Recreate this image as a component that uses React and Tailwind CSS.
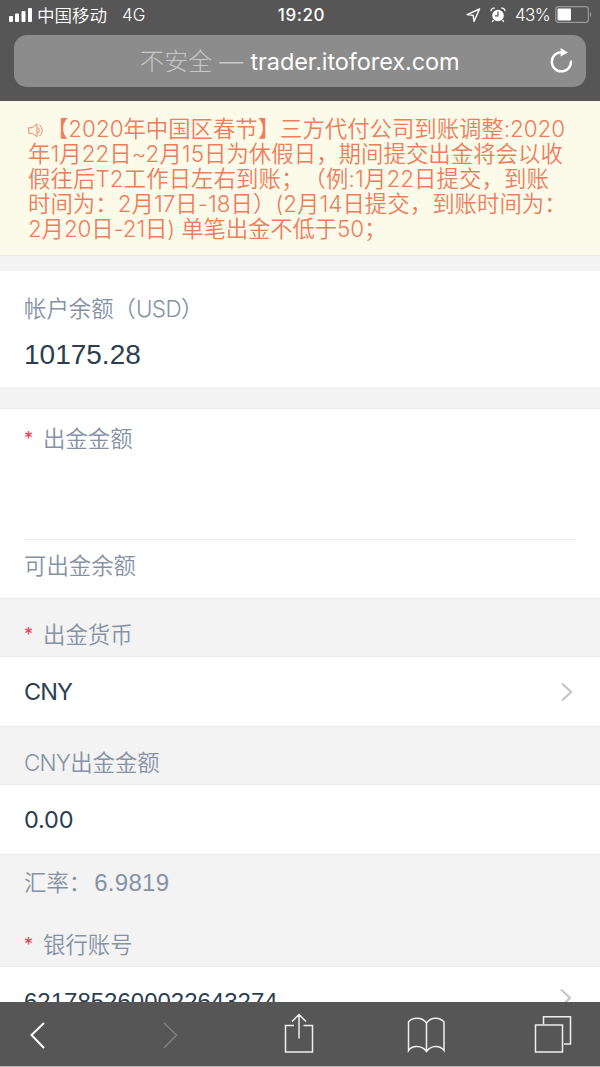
import clsx from "clsx";

const notice = [
    { text: "【2020年中国区春节】三方代付公司到账调整:2020", className: "ml-[2px] tracking-[-0.02px]" },
    { text: "年1月22日~2月15日为休假日，期间提交出金将会以收", className: "tracking-[0.04px]" },
    { text: "假往后T2工作日左右到账；（例:1月22日提交，到账", className: "tracking-[0.1px]" },
    { text: "时间为：2月17日-18日）(2月14日提交，到账时间为：", className: "tracking-[0.04px]" },
    { text: "2月20日-21日) 单笔出金不低于50；", className: "tracking-[-0.12px]" },
];

function StatusBar() {
    return (
        <div className="flex h-[35px] items-start pl-[9px] pr-[7px] text-[17px] leading-[31px] text-white">
            <div className="flex flex-1 items-start">
                <svg width="24" height="15" viewBox="0 0 24 15" className="mt-[8px]" fill="currentColor">
                    <rect x="0" y="8" width="4" height="6" rx="1" />
                    <rect x="6" y="5.5" width="4" height="8.5" rx="1" />
                    <rect x="12.5" y="3" width="4" height="11" rx="1" />
                    <rect x="19" y="0" width="4" height="14" rx="1" />
                </svg>
                <span className="ml-1 text-[17.5px] font-[350]">中国移动</span>
                <span className="ml-[15px] font-[350]">4G</span>
            </div>
            <span className="pl-px font-medium tracking-[0.6px]">19:20</span>
            <div className="flex flex-1 items-start justify-end">
                <svg width="15" height="15" viewBox="0 0 15 15" className="mt-[8px] mr-[9px]" fill="none" stroke="currentColor" strokeWidth="1.4" strokeLinejoin="round">
                    <path d="M13.5 1 L1.2 6.6 L7.2 7.4 L8 13.5 Z" />
                </svg>
                <svg width="16" height="16" viewBox="0 0 16 16" className="mt-[7px] mr-[9px]" fill="currentColor">
                    <circle cx="8" cy="8.5" r="5.8" />
                    <path d="M1 4.2 A3 3 0 0 1 4.8 1.2 M11.2 1.2 A3 3 0 0 1 15 4.2 M3.5 13 L2.2 14.8 M12.5 13 L13.8 14.8" fill="none" stroke="currentColor" strokeWidth="1.3" />
                    <path d="M8 4.5 V8.8 H5" fill="none" stroke="#565656" strokeWidth="1.2" />
                </svg>
                <span className="mr-[5px] text-[17px] font-[350] tracking-[-0.6px]">43%</span>
                <svg width="38" height="17" viewBox="0 0 38 17" className="mt-[6px]">
                    <rect x="0.7" y="0.7" width="32.6" height="15.6" rx="2.6" fill="none" stroke="#999" strokeWidth="1.2" />
                    <rect x="2.5" y="2.5" width="13.5" height="12" rx="1" fill="#fff" />
                    <path d="M35 5.5 Q37.5 8.5 35 11.5 Z" fill="#999" />
                </svg>
            </div>
        </div>
    );
}

function AddressBar() {
    return (
        <div className="mx-[14px] flex h-[52px] items-center rounded-[13px] bg-[#8c8c8c] text-[24px]">
            <div className="ml-[126px] flex-1 whitespace-pre pt-px text-[#c8c8c8]">
                <span className="font-light tracking-[0.15px]">不安全 — </span>
                <span className="text-[23.5px] tracking-[-0.08px] text-white">trader.itoforex.com</span>
            </div>
            <svg width="26" height="28" viewBox="0 0 26 28" className="mr-[12px]" fill="none" stroke="#fff" strokeWidth="2.4" strokeLinecap="round">
                <path d="M13.5 5.2 A9.6 9.6 0 1 0 23 14.8" />
                <path d="M12.6 1 L20 5.4 L12.6 9.6 Z" fill="#fff" stroke="none" />
            </svg>
        </div>
    );
}

function Notice() {
    return (
        <div className="h-[155px] border-b border-[#eceae4] bg-[#fcfbe9] pt-[15px] pl-[28px] text-[22.4px] leading-[25px] font-[350] text-[#ee7d60]">
            {notice.map((line, i) => (
                <div key={i} className="flex items-center whitespace-pre">
                    {i === 0 && (
                        <svg width="16" height="15" viewBox="0 0 17 16" className="mt-1 shrink-0" fill="none" stroke="currentColor" strokeWidth="1">
                            <path d="M0.8 5 H4.5 L9.5 1 V14.5 L4.5 11 H0.8 Z" />
                            <path d="M11 5 Q13 8 11 11 M12 1.8 Q18.5 8 12 14.2" />
                        </svg>
                    )}
                    <span className={line.className}>{line.text}</span>
                </div>
            ))}
        </div>
    );
}

function Label({ required = false, className, children }) {
    return (
        <div className={clsx("flex items-center text-[22.4px] leading-[30px] font-[350] text-[#8592a6]", className)}>
            {required && <span className="w-[19px] text-[18px] font-normal text-[#ec3b50]">*</span>}
            <span>{children}</span>
        </div>
    );
}

function Chevron({ className }) {
    return (
        <svg width="14" height="20" viewBox="0 0 14 20" className={className} fill="none" stroke="#c8c8cc" strokeWidth="2.4">
            <path d="M2 1.5 L11 10 L2 18.5" />
        </svg>
    );
}

function Toolbar() {
    return (
        <div className="h-[65px] shrink-0 border-b border-[#b5b5b5] bg-[#565656]">
            <svg width="600" height="64" viewBox="0 0 600 64" fill="none" stroke="#eee" strokeWidth="1.5">
                <path d="M44 21 L31.5 33 L44 46" stroke="#fff" strokeWidth="2" />
                <path d="M164 21 L176.5 33 L164 46" stroke="#7e7e7e" strokeWidth="1.6" />
                <path d="M294 23.5 H285.5 V50 H312.5 V23.5 H303.5 M299 36.5 V13 M292 19.5 L299 12.5 L306 19.5" />
                <path d="M426.5 21 C422 14.5 412 15 408.5 20 V48.5 C412 43 422 43 426.5 49.5 C431 43 440 43 444 48.5 V20 C440 15 431 14.5 426.5 21 Z M426.5 21 V50" />
                <path d="M535.5 23 H562.5 V50 H535.5 Z M543.5 22 V14.8 H570.5 V42 H564" />
            </svg>
        </div>
    );
}

export default function App() {
    return (
        <div className="flex h-[1067px] w-[600px] flex-col overflow-hidden bg-[#f3f3f3] font-['Inter','Noto_Sans_CJK_SC',sans-serif] [text-spacing-trim:space-all]">
            <header className="h-[101px] shrink-0 bg-[#565656]">
                <StatusBar />
                <AddressBar />
            </header>
            <main className="min-h-0 flex-1 overflow-hidden text-[24px] text-[#2c3e50]">
                <Notice />
                <section className="mt-[15px] h-[116px] bg-white pt-[23px] pl-6">
                    <Label>
                        帐户余额（<span className="tracking-[-0.6px]">USD</span>）
                    </Label>
                    <div className="mt-[13px] font-['Liberation_Sans',sans-serif] text-[28px] leading-[36px]">10175.28</div>
                </section>
                <section className="mt-[21px] h-[191px] border-y border-[#ececec] bg-white px-6 pt-[15px]">
                    <Label required>出金金额</Label>
                    <div className="h-[86px] border-b border-[#ececec]" />
                    <Label className="mt-[11px]">可出金余额</Label>
                </section>
                <Label required className="h-[57px] pt-[14px] pl-6">出金货币</Label>
                <div className="flex h-[71px] items-center justify-between border-y border-[#ececec] bg-white pr-[26px] pl-6">
                    <span className="text-[23.5px] tracking-[-0.9px]">CNY</span>
                    <Chevron />
                </div>
                <Label className="h-[57px] pt-[15px] pl-6">
                    <span className="tracking-[-0.7px]">CNY</span>出金金额
                </Label>
                <div className="flex h-[71px] items-center border-y border-[#ececec] bg-white pl-6 text-[23.5px] tracking-[-0.2px]">0.00</div>
                <Label className="h-[55px] pl-6">
                    汇率：<span className="ml-[3px] font-['Liberation_Sans',sans-serif] text-[24px] tracking-[0.3px]">6.9819</span>
                </Label>
                <Label required className="h-[56px] pt-[13px] pl-6">银行账号</Label>
                <div className="flex h-[71px] items-center justify-between border-y border-[#ececec] bg-white pr-[27px] pl-6">
                    <span className="font-['Liberation_Sans',sans-serif]">6217852600022643274</span>
                    <Chevron className="mb-2" />
                </div>
            </main>
            <Toolbar />
        </div>
    );
}
